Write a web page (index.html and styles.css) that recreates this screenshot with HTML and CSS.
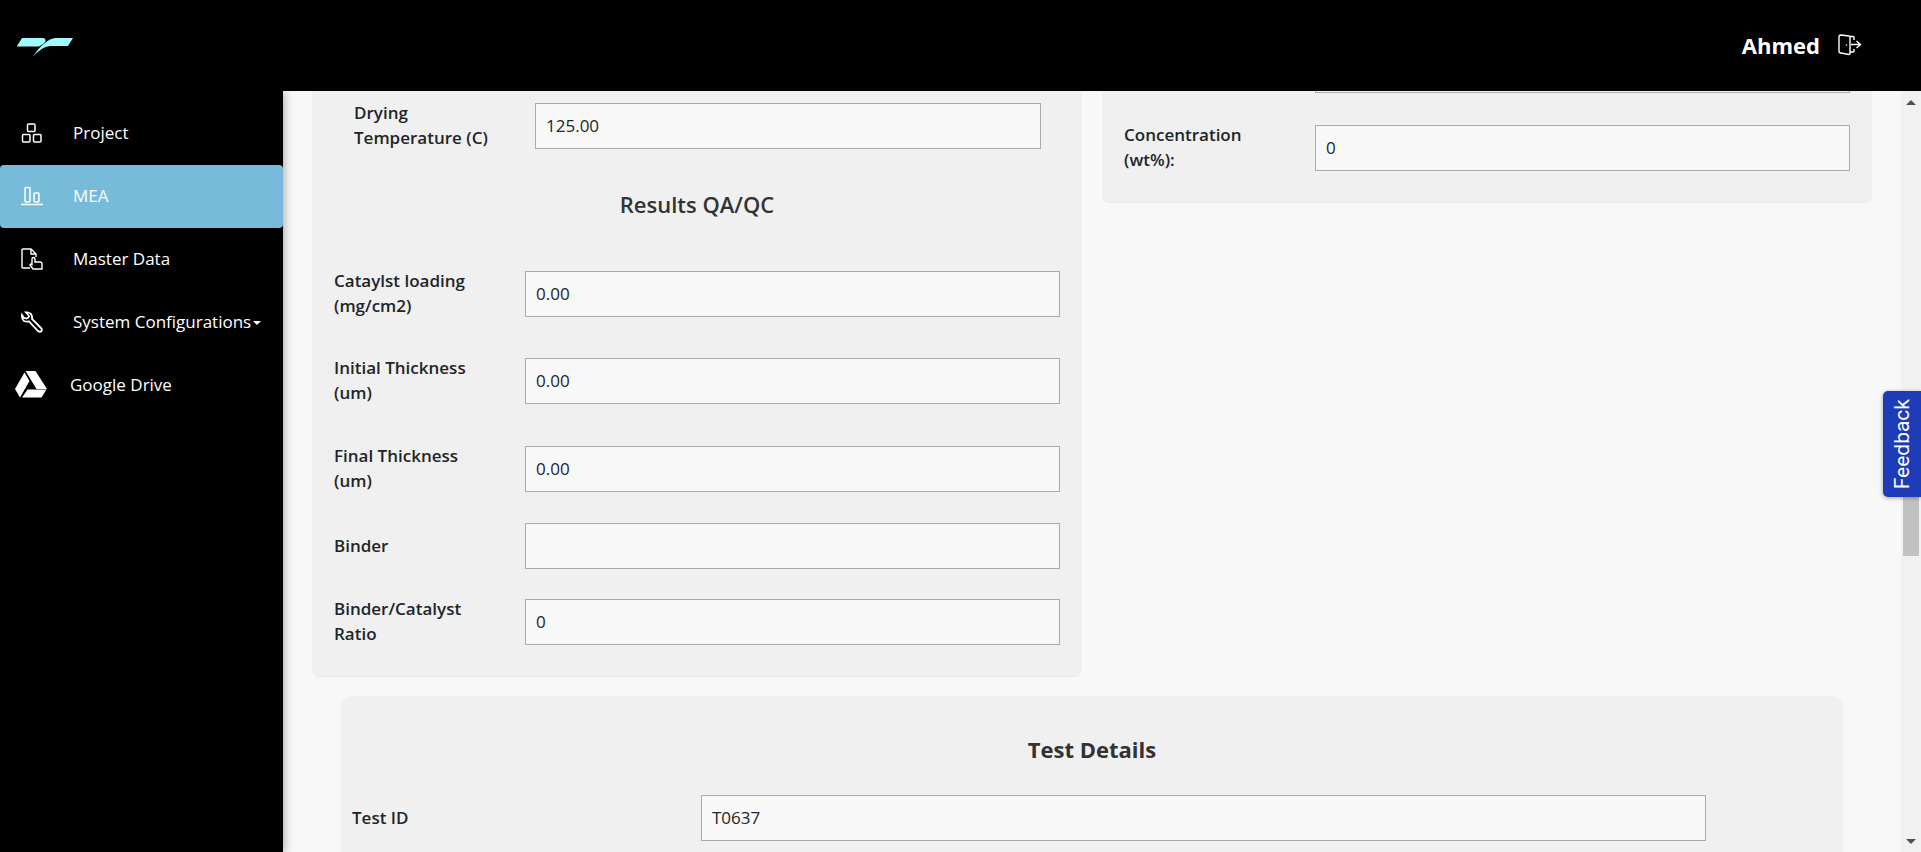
FILE: index.html
```html
<!DOCTYPE html>
<html lang="en">
<head>
    <meta charset="UTF-8">
    <title>MEA</title>
    <link rel="stylesheet" href="styles.css">
</head>
<body>
    <header class="topbar">
        <svg class="logo" width="56" height="19" viewBox="0 0 56 19">
            <path d="M0 8 L5 0 H27 Q29 1 28.500 3.500 Q27 6 22 8.500 H0 Z" fill="#9ffbfd"/>
            <path d="M16 19 Q21 10 28 5 Q32 1 38 0 H56 L51 8 H33 Q24 9 16 19 Z" fill="#9ffbfd"/>
        </svg>
        <div class="user">
            <span class="user-name">Ahmed</span>
            <svg class="exit-icon" width="24" height="22" viewBox="0 0 24 22" fill="none" stroke="#fff" stroke-width="1.400">
                <path d="M11 2 L3 1 Q1 1 1 3 V17 Q1 19 3 19 L11 20.500 Q12 20.500 12 19.500 V3 Q12 2 11 2 Z"/>
                <path d="M12 2.500 H15 Q16 2.500 16 3.500 V6 M16 15 V17 Q16 18 15 18 H12 M13 10.500 H22 M18.500 7 L22.500 10.500 L18.500 14"/>
                <circle cx="8.500" cy="11" r="0.800" fill="#fff" stroke="none"/>
            </svg>
        </div>
    </header>

    <div class="layout">
        <aside class="sidebar">
            <a class="nav-item">
                <svg class="nav-icon" width="22" height="20" viewBox="0 0 22 20" fill="none" stroke="#fff" stroke-width="1.500">
                    <rect x="6.500" y="1" width="7.500" height="7.500" rx="1"/>
                    <rect x="1.500" y="11.500" width="7.500" height="7.500" rx="1"/>
                    <rect x="12.500" y="11.500" width="7.500" height="7.500" rx="1"/>
                </svg>
                <span>Project</span>
            </a>
            <a class="nav-item active">
                <svg class="nav-icon" width="22" height="20" viewBox="0 0 22 20" fill="none" stroke="#fff" stroke-width="1.500">
                    <rect x="4" y="1.500" width="5" height="14.500" rx="1"/>
                    <rect x="13" y="7" width="5" height="9" rx="1"/>
                    <path d="M0 18.500 H22"/>
                </svg>
                <span>MEA</span>
            </a>
            <a class="nav-item">
                <svg class="nav-icon" width="22" height="22" viewBox="0 0 22 22" fill="none" stroke="#fff" stroke-width="1.400">
                    <path d="M9 20 H2 Q1 20 1 19 V2 Q1 1 2 1 H10 L15 6 V9 M10 1 V6 H15"/>
                    <path d="M12 21 L9 17 Q9 15.500 11 16.500 V11 Q11 9.500 12.500 9.500 Q14 9.500 14 11 V14 H19 Q21 14 21 16 V21 Z"/>
                </svg>
                <span>Master Data</span>
            </a>
            <a class="nav-item">
                <svg class="nav-icon" width="22" height="22" viewBox="0 0 22 22" fill="none" stroke="#fff" stroke-width="1.800">
                    <path d="M7 1.500 L5 1.500 L8 5 Q8 7 6 7.500 L3 7 L1 4 Q0.500 8 3 10 Q5 11 8 10.500 L17 20 Q19 21.500 20.500 20 Q21.500 18.500 20 17 L11 8 Q11.500 5 10 3 Q9 2 7 1.500 Z"/>
                </svg>
                <span class="nav-caret">System Configurations</span>
            </a>
            <a class="nav-item nav-item-drive">
                <svg class="drive-icon" width="32" height="27" viewBox="0 0 32 27" fill="#fff">
                    <path d="M10.500 0 H20.500 L32 18 H21.500 Z"/>
                    <path d="M9.500 1.500 L14.500 10 L5 26.500 L0 18 Z"/>
                    <path d="M12.500 18.500 H31.500 L26.500 26.500 H7 Z"/>
                </svg>
                <span>Google Drive</span>
            </a>
        </aside>

        <main class="content">
            <div class="scroll-inner">
                <div class="columns">
                    <section class="card card-left">
                        <div class="row row-narrow">
                            <label class="row-label">Drying Temperature (C)</label>
                            <input class="row-input" type="text" value="125.00">
                        </div>
                        <h3 class="card-title">Results QA/QC</h3>
                        <div class="row row-gap-lg">
                            <label class="row-label">Cataylst loading (mg/cm2)</label>
                            <input class="row-input" type="text" value="0.00">
                        </div>
                        <div class="row row-gap-xl">
                            <label class="row-label">Initial Thickness (um)</label>
                            <input class="row-input" type="text" value="0.00">
                        </div>
                        <div class="row">
                            <label class="row-label">Final Thickness (um)</label>
                            <input class="row-input" type="text" value="0.00">
                        </div>
                        <div class="row row-gap-xs">
                            <label class="row-label">Binder</label>
                            <input class="row-input" type="text" value="">
                        </div>
                        <div class="row">
                            <label class="row-label">Binder/Catalyst Ratio</label>
                            <input class="row-input" type="text" value="0">
                        </div>
                    </section>

                    <section class="card card-right">
                        <div class="row row-gap-md">
                            <label class="row-label"></label>
                            <input class="row-input" type="text" value="">
                        </div>
                        <div class="row">
                            <label class="row-label">Concentration (wt%):</label>
                            <input class="row-input" type="text" value="0">
                        </div>
                    </section>
                </div>

                <section class="card card-wide">
                    <h3 class="card-title card-title-bold">Test Details</h3>
                    <div class="row row-wide">
                        <label class="row-label">Test ID</label>
                        <input class="row-input" type="text" value="T0637">
                    </div>
                </section>
            </div>
        </main>

        <div class="scrollbar">
            <span class="arrow-up"></span>
            <div class="scroll-track"><div class="scroll-thumb"></div></div>
            <span class="arrow-down"></span>
        </div>
    </div>

    <button class="feedback-btn"><span>Feedback</span></button>
</body>
</html>
```

FILE: styles.css
```css
* {
    box-sizing: border-box;
}

body {
    font-family: 'Open Sans', 'Noto Sans', sans-serif;
    background-color: #f8f8f8;
    color: #212529;
    margin: 0;
    height: 100vh;
    display: flex;
    flex-direction: column;
    overflow: hidden;
}

.topbar {
    background-color: #000;
    color: #fff;
    height: 91px;
    flex: none;
    display: flex;
    align-items: center;
    justify-content: space-between;
    padding: 0 59px 0 17px;
    position: relative;
    z-index: 2;
}

.logo {
    margin-top: 4px;
}

.user {
    display: flex;
    align-items: center;
    gap: 18px;
}

.user-name {
    font-size: 22px;
    font-weight: 700;
    margin-bottom: 2px;
}

.exit-icon {
    margin-bottom: 2px;
}

.layout {
    flex: 1;
    min-height: 0;
    display: flex;
}

.sidebar {
    width: 283px;
    flex: none;
    background-color: #000;
    padding-top: 11px;
    box-shadow: 0 0 10px rgba(0, 0, 0, 0.4);
    position: relative;
    z-index: 1;
}

.nav-item {
    display: flex;
    align-items: center;
    height: 63px;
    padding-left: 21px;
    padding-bottom: 2px;
    color: #fff;
    font-size: 17px;
    border-radius: 4px;
}

.nav-item.active {
    background-color: #77bad9;
}

.nav-icon {
    width: 22px;
    margin-right: 30px;
    flex: none;
}

.nav-caret::after {
    content: "";
    display: inline-block;
    margin-left: 2px;
    vertical-align: 3px;
    border-top: 4px solid #fff;
    border-left: 4px solid transparent;
    border-right: 4px solid transparent;
}

.nav-item-drive {
    padding-left: 15px;
}

.drive-icon {
    margin-right: 23px;
    flex: none;
}

.content {
    flex: 1;
    min-width: 0;
    overflow: hidden;
}

/* page is scrolled down in the screenshot */
.scroll-inner {
    margin-top: -78px;
    padding: 0 29px;
}

.columns {
    display: grid;
    grid-template-columns: 1fr 1fr;
    gap: 20px;
    align-items: start;
}

.card {
    background-color: #f0f0f0;
    border-radius: 8px;
    border-bottom: 1px solid #e8e8e8;
    padding: 0 22px;
}

.card-left {
    padding-top: 88px;
}

.card-right {
    padding-top: 34px;
}

.card-wide {
    margin: 19px 29px 0;
    padding: 0 11px 60px;
    border-bottom: none;
    border-radius: 12px;
}

.card-title {
    margin: 0;
    text-align: center;
    font-size: 22px;
    font-weight: 600;
    color: #333;
    padding: 38px 0 50px;
    line-height: 30px;
}

.card-title-bold {
    font-weight: 700;
    padding: 38px 0 31px;
}

.row {
    display: flex;
    align-items: center;
    margin-bottom: 29px;
}

.row-gap-xs {
    margin-bottom: 28px;
}

.row-gap-md {
    margin-bottom: 30px;
}

.row-gap-lg {
    margin-bottom: 37px;
}

.row-gap-xl {
    margin-bottom: 38px;
}

.row-label {
    width: 191px;
    flex: none;
    font-size: 17px;
    font-weight: 600;
    line-height: 25px;
    padding-right: 40px;
    transform: translateY(-1px);
}

.row-input {
    flex: 1;
    min-width: 0;
    height: 46px;
    background-color: #f8f8f8;
    border: 1px solid #aaa;
    padding: 0 10px 2px;
    font-family: inherit;
    font-size: 17px;
    color: #212529;
}

.row-narrow {
    padding: 0 19px 0 20px;
    margin-bottom: 0;
}

.row-narrow .row-label {
    width: 181px;
    padding-right: 30px;
}

.row-wide {
    padding-right: 126px;
    margin-bottom: 0;
}

.row-wide .row-label {
    width: 349px;
}

.scrollbar {
    width: 20px;
    flex: none;
    background-color: #f1f1f1;
    display: flex;
    flex-direction: column;
    align-items: center;
}

.arrow-up,
.arrow-down {
    flex: none;
    width: 0;
    height: 0;
    border-left: 5px solid transparent;
    border-right: 5px solid transparent;
}

.arrow-up {
    margin-top: 9px;
    border-bottom: 5px solid #505050;
}

.arrow-down {
    margin-bottom: 8px;
    border-top: 5px solid #505050;
}

.scroll-track {
    flex: 1;
    width: 100%;
    padding: 0 2px;
}

.scroll-thumb {
    margin-top: 305px;
    height: 146px;
    background-color: #c1c1c1;
}

.feedback-btn {
    position: absolute;
    top: 391px;
    right: 0;
    width: 38px;
    height: 106px;
    background-color: #1e3bb8;
    color: #fff;
    border: none;
    border-radius: 5px 0 0 5px;
    box-shadow: 0 1px 4px rgba(0, 0, 0, 0.35);
    padding: 0;
    font-family: 'Roboto', sans-serif;
    font-size: 21px;
    display: flex;
    align-items: center;
    justify-content: center;
}

.feedback-btn span {
    writing-mode: vertical-rl;
    transform: rotate(180deg);
}
```
